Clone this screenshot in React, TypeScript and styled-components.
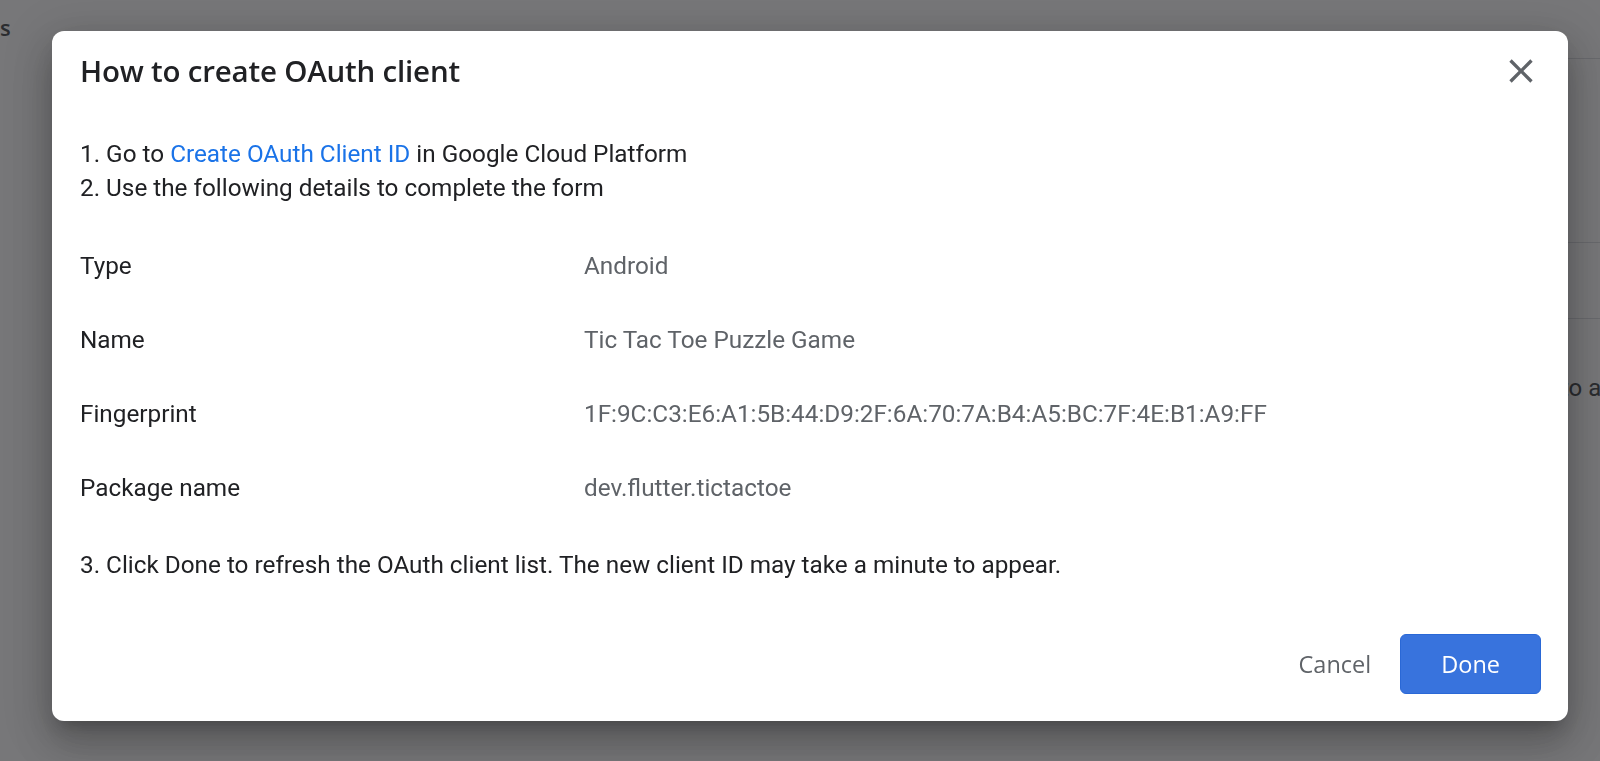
import React from 'react';
import styled, { createGlobalStyle } from 'styled-components';

const GlobalStyle = createGlobalStyle`
  html, body {
    margin: 0;
    padding: 0;
    background: #ffffff;
  }
  body {
    font-family: Roboto, "Liberation Sans", Arial, sans-serif;
    color: #202124;
  }
  * {
    box-sizing: border-box;
  }
`;

// the page behind the dialog, mostly hidden by the scrim
const BackPage = styled.div`
  display: grid;
  grid-template-columns: 1fr 39px;
  min-height: 100vh;
  overflow: hidden;
`;

const BackMain = styled.div`
  padding-top: 12px;
`;

const BackHeading = styled.h1`
  margin: 0;
  font-family: "Open Sans", Roboto, sans-serif;
  font-size: 22px;
  font-weight: 600;
  line-height: 30px;
  color: #3c4043;
`;

const BackSide = styled.div`
  display: flex;
  flex-direction: column;
  white-space: nowrap;
`;

const BackRow = styled.div<{ h: number }>`
  height: ${p => p.h}px;
  border-bottom: 1px solid #dadce0;
`;

const BackText = styled.p`
  margin: 52px 0 0;
  font-size: 24px;
  line-height: 34px;
  color: #3c4043;
`;

const Scrim = styled.div`
  position: fixed;
  inset: 0;
  background: rgba(32, 33, 36, 0.61);
  padding: 31px 32px 0 52px;
`;

const Dialog = styled.div`
  width: 1516px;
  height: 690px;
  background: #ffffff;
  border-radius: 12px;
  box-shadow: 0 24px 38px 3px rgba(0, 0, 0, 0.16), 0 9px 46px 8px rgba(0, 0, 0, 0.14),
    0 11px 15px -7px rgba(0, 0, 0, 0.22);
  padding: 20px 27px 27px 28px;
  display: flex;
  flex-direction: column;
`;

const Header = styled.div`
  display: flex;
  align-items: center;
  justify-content: space-between;
`;

const Title = styled.h2`
  margin: 0;
  font-family: "Open Sans", Roboto, sans-serif;
  font-size: 29.5px;
  font-weight: 600;
  line-height: 36px;
  letter-spacing: -0.2px;
  color: #202124;
`;

const CloseButton = styled.button`
  width: 40px;
  height: 40px;
  padding: 0;
  border: none;
  background: transparent;
  display: flex;
  align-items: center;
  justify-content: center;
  cursor: pointer;
`;

const Body = styled.div`
  margin-top: 46px;
  font-size: 24.3px;
  line-height: 34px;
  color: #202124;
`;

const Step = styled.div``;

const Link = styled.a`
  color: #1a73e8;
  text-decoration: none;
`;

const Details = styled.div`
  display: grid;
  grid-template-columns: 504px 1fr;
  row-gap: 40px;
  margin: 44px 0 43px;
`;

const Label = styled.div`
  color: #202124;
`;

const Value = styled.div`
  color: #5f6368;
`;

const Actions = styled.div`
  margin-top: auto;
  display: flex;
  justify-content: flex-end;
  align-items: center;
  gap: 6px;
`;

const ActionButton = styled.button<{ primary?: boolean }>`
  height: 60px;
  min-width: 100px;
  padding: 0 ${p => (p.primary ? '40px' : '22px')};
  border-radius: 6px;
  font-family: "Open Sans", Roboto, sans-serif;
  font-size: 23.5px;
  font-weight: 500;
  cursor: pointer;
  border: 1px solid ${p => (p.primary ? '#2a68d6' : 'transparent')};
  background: ${p => (p.primary ? '#3873dd' : 'transparent')};
  color: ${p => (p.primary ? '#ffffff' : '#5f6368')};
`;

const details = [
  { label: 'Type', value: 'Android' },
  { label: 'Name', value: 'Tic Tac Toe Puzzle Game' },
  { label: 'Fingerprint', value: '1F:9C:C3:E6:A1:5B:44:D9:2F:6A:70:7A:B4:A5:BC:7F:4E:B1:A9:FF' },
  { label: 'Package name', value: 'dev.flutter.tictactoe' },
];

const CloseIcon = () => (
  <svg width="40" height="40" viewBox="0 0 24 24" fill="#5f6368">
    <path d="M19 6.41L17.59 5 12 10.59 6.41 5 5 6.41 10.59 12 5 17.59 6.41 19 12 13.41 17.59 19 19 17.59 13.41 12z" />
  </svg>
);

const App: React.FC = () => {
  return (
    <>
      <GlobalStyle />
      <BackPage>
        <BackMain>
          <BackHeading>s</BackHeading>
        </BackMain>
        <BackSide>
          <BackRow h={59} />
          <BackRow h={184} />
          <BackRow h={76} />
          <BackText>to access your project</BackText>
        </BackSide>
      </BackPage>
      <Scrim>
        <Dialog role="dialog">
          <Header>
            <Title>How to create OAuth client</Title>
            <CloseButton aria-label="Close">
              <CloseIcon />
            </CloseButton>
          </Header>
          <Body>
            <Step>
              1. Go to <Link href="#">Create OAuth Client ID</Link> in Google Cloud Platform
            </Step>
            <Step>2. Use the following details to complete the form</Step>
            <Details>
              {details.map(d => (
                <React.Fragment key={d.label}>
                  <Label>{d.label}</Label>
                  <Value>{d.value}</Value>
                </React.Fragment>
              ))}
            </Details>
            <Step>3. Click Done to refresh the OAuth client list. The new client ID may take a minute to appear.</Step>
          </Body>
          <Actions>
            <ActionButton>Cancel</ActionButton>
            <ActionButton primary>Done</ActionButton>
          </Actions>
        </Dialog>
      </Scrim>
    </>
  );
};

export default App;
